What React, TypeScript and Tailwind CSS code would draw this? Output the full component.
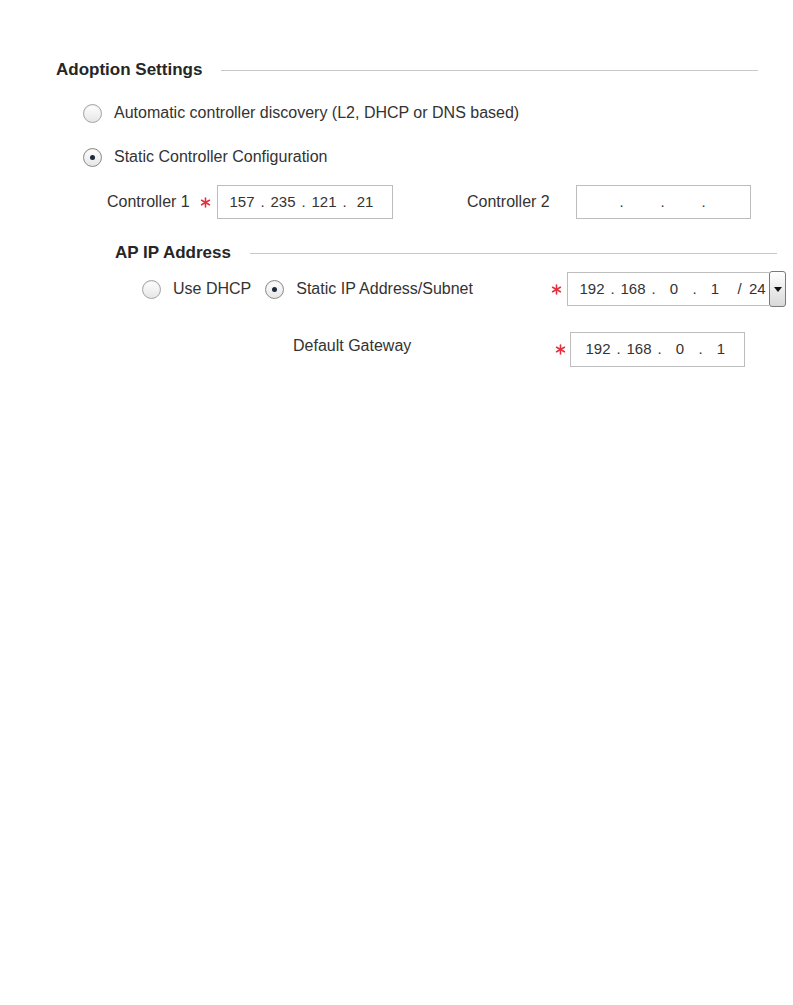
import React from "react";

const Asterisk = () => (
  <svg width="11" height="11" viewBox="0 0 11 11" className="shrink-0">
    <g stroke="#e2303c" strokeWidth="1.6" strokeLinecap="round">
      <line x1="5.5" y1="1" x2="5.5" y2="10" />
      <line x1="1.6" y1="3.25" x2="9.4" y2="7.75" />
      <line x1="1.6" y1="7.75" x2="9.4" y2="3.25" />
    </g>
  </svg>
);

const Radio = ({ checked = false }: { checked?: boolean }) => (
  <span
    className={`flex h-[19px] w-[19px] shrink-0 items-center justify-center rounded-full border bg-gradient-to-b from-white to-[#e6e6e6] shadow-[inset_0_1px_1px_rgba(0,0,0,0.08)] ${
      checked ? "border-[#8a8a8a]" : "border-[#a3a3a3]"
    }`}
  >
    {checked && <span className="h-[5px] w-[5px] rounded-full bg-[#1e2838]" />}
  </span>
);

const Octet = ({ value }: { value: string }) => (
  <span className="w-[30px] text-center">{value}</span>
);

const Dot = ({ ch = "." }: { ch?: string }) => (
  <span className="w-[11px] text-center">{ch}</span>
);

const IpBox = ({
  octets,
  width,
  offset = 9,
}: {
  octets: string[];
  width: string;
  offset?: number;
}) => (
  <div
    className={`flex h-[34px] items-center border border-[#bdbdbd] bg-white text-[15px] text-[#333] ${width}`}
  >
    <span style={{ width: offset }} />
    <Octet value={octets[0]} />
    <Dot />
    <Octet value={octets[1]} />
    <Dot />
    <Octet value={octets[2]} />
    <Dot />
    <Octet value={octets[3]} />
  </div>
);

const SectionHeader = ({ title, width }: { title: string; width: string }) => (
  <div className={`flex h-[20px] items-center ${width}`}>
    <span className="text-[17px] font-bold text-[#262626]">{title}</span>
    <div className="ml-[19px] h-px flex-1 bg-[#c6cacd]" />
  </div>
);

export default function App() {
  return (
    <div className="min-h-[1005px] w-[793px] bg-white pl-[56px] pt-[60px] font-['Liberation_Sans',Arial,sans-serif] text-[16px] text-[#333]">
      <SectionHeader title="Adoption Settings" width="w-[702px]" />

      <div className="mt-[23px] flex h-[20px] items-center gap-[12px] pl-[27px]">
        <Radio />
        <span>Automatic controller discovery (L2, DHCP or DNS based)</span>
      </div>

      <div className="mt-[24px] flex h-[20px] items-center gap-[12px] pl-[27px]">
        <Radio checked />
        <span>Static Controller Configuration</span>
      </div>

      <div className="mt-[18px] flex h-[34px] items-center pl-[51px]">
        <span className="w-[93px]">Controller 1</span>
        <span className="flex w-[17px] items-center">
          <Asterisk />
        </span>
        <IpBox octets={["157", "235", "121", "21"]} width="w-[176px]" />
        <span className="ml-[74px] w-[109px]">Controller 2</span>
        <IpBox octets={["", "", "", ""]} width="w-[175px]" />
      </div>

      <div className="mt-[24px] pl-[59px]">
        <SectionHeader title="AP IP Address" width="w-[662px]" />
      </div>

      <div className="mt-[9px] flex h-[34px] items-center">
        <div className="flex w-[495px] items-center pl-[86px]">
          <Radio />
          <span className="ml-[12px]">Use DHCP</span>
          <span className="ml-[14px]">
            <Radio checked />
          </span>
          <span className="ml-[12px]">Static IP Address/Subnet</span>
        </div>
        <span className="flex w-[16px] items-center">
          <Asterisk />
        </span>
        <div className="flex h-[34px] w-[202px] items-center border border-r-0 border-[#bdbdbd] bg-white text-[15px] text-[#333]">
          <span className="w-[9px]" />
          <Octet value="192" />
          <Dot />
          <Octet value="168" />
          <Dot />
          <Octet value="0" />
          <Dot />
          <Octet value="1" />
          <span className="w-[19px] text-center">/</span>
          <span>24</span>
        </div>
        <div className="flex h-[36px] w-[17px] items-center justify-center rounded-[3px] border border-[#7a7a7a] bg-gradient-to-b from-white to-[#d9d9d9]">
          <svg width="8" height="5" viewBox="0 0 8 5">
            <path d="M0 0 L8 0 L4 5 Z" fill="#111" />
          </svg>
        </div>
      </div>

      <div className="mt-[26px] flex h-[35px] items-center">
        <span className="w-[499px] pb-[8px] pl-[237px]">Default Gateway</span>
        <span className="flex w-[15px] items-center">
          <Asterisk />
        </span>
        <div className="flex h-[35px] w-[175px] items-center border border-[#bdbdbd] bg-white text-[15px] text-[#333]">
          <span className="w-[12px]" />
          <Octet value="192" />
          <Dot />
          <Octet value="168" />
          <Dot />
          <Octet value="0" />
          <Dot />
          <Octet value="1" />
        </div>
      </div>
    </div>
  );
}
